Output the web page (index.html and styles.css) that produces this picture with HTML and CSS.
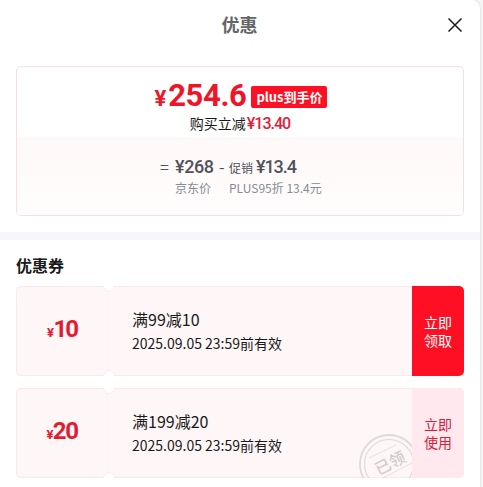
FILE: index.html
```html
<!DOCTYPE html>
<html lang="zh-CN">
<head>
  <meta charset="UTF-8" />
  <meta name="viewport" content="width=device-width, initial-scale=1.0"/>
  <title>优惠</title>
  <link rel="stylesheet" href="styles.css">
</head>
<body>
  <div class="popup">
    <header class="popup-header">
      <h1>优惠</h1>
      <button class="close" type="button" aria-label="关闭">
        <svg width="16" height="16" viewBox="0 0 16 16"><path d="M1.5 1.5l13 13M14.5 1.5l-13 13" fill="none" stroke="#1a1a1a" stroke-width="1.5"/></svg>
      </button>
    </header>

    <section class="price-card">
      <div class="price-top">
        <div class="final-price">
          <span class="yen">¥</span><span class="amount">254.6</span><span class="tag">plus到手价</span>
        </div>
        <div class="saving">购买立减<span class="saving-price">¥13.40</span></div>
      </div>
      <div class="price-detail">
        <span class="sign equal">=</span>
        <div class="item base">
          <div class="value">¥268</div>
          <div class="note">京东价</div>
        </div>
        <span class="sign minus">-</span>
        <div class="item">
          <div class="value"><span class="label">促销</span>¥13.4</div>
          <div class="note">PLUS95折 13.4元</div>
        </div>
      </div>
    </section>

    <div class="divider"></div>

    <section class="coupons">
      <h2>优惠券</h2>
      <div class="coupon">
        <div class="coupon-price"><span class="coupon-yen">¥</span>10</div>
        <div class="coupon-info">
          <div class="coupon-title">满99减10</div>
          <div class="coupon-time">2025.09.05 23:59前有效</div>
        </div>
        <button class="coupon-btn" type="button">立即<br>领取</button>
      </div>
      <div class="coupon received">
        <div class="coupon-price"><span class="coupon-yen">¥</span>20</div>
        <div class="coupon-info">
          <div class="coupon-title">满199减20</div>
          <div class="coupon-time">2025.09.05 23:59前有效</div>
          <svg class="stamp" width="53" height="45" viewBox="0 0 53 45">
            <g fill="none" stroke="#e0d8da">
              <circle cx="30" cy="31" r="29" stroke-width="1.8"/>
              <circle cx="30" cy="31" r="24.5" stroke-width="1.2"/>
              <path d="M10 25L37 12M20 47L53 30" stroke-width="0.8"/>
            </g>
            <text class="stamp-text" x="31" y="36" text-anchor="middle" transform="rotate(-27 31 30)">已领</text>
          </svg>
        </div>
        <button class="coupon-btn" type="button">立即<br>使用</button>
      </div>
    </section>
  </div>
</body>
</html>
```
FILE: styles.css
```css
* {
  box-sizing: border-box;
}
body {
  margin: 0;
  height: 487px;
  overflow: hidden;
  background: #f5f5f6;
  font-family: "Noto Sans CJK SC", sans-serif;
  color: #1a1a1a;
}
h1, h2 {
  margin: 0;
}
button {
  border: 0;
  padding: 0;
  font-family: inherit;
}
.popup {
  width: 480px;
  height: 487px;
  background: #fff;
  border-top-right-radius: 8px;
  box-shadow: 0 0 2px rgba(0, 0, 0, 0.18);
}
.popup-header {
  display: grid;
  grid-template-columns: 1fr auto 1fr;
  align-items: center;
  height: 66px;
  padding: 0 17px 19px 16px;
}
.popup-header h1 {
  grid-column: 2;
  font-size: 18px;
  line-height: 26px;
  color: #666;
}
.close {
  justify-self: end;
  display: flex;
  background: none;
  margin-top: 3px;
}

/* price */
.price-card {
  width: 448px;
  height: 150px;
  margin: 0 16px;
  border: 1px solid #f7dfe4;
  border-radius: 5px;
  overflow: hidden;
}
.price-top {
  height: 71px;
  padding-top: 9px;
}
.final-price {
  display: flex;
  justify-content: center;
  align-items: baseline;
  height: 37px;
  padding-left: 1px;
  line-height: 40px;
  font-family: Roboto, "Noto Sans CJK SC", sans-serif;
  font-weight: 700;
  color: #f01428;
}
.yen {
  font-size: 22px;
  margin-right: 2px;
}
.amount {
  font-size: 31px;
  letter-spacing: -0.4px;
}
.tag {
  align-self: flex-start;
  height: 22px;
  margin: 10px 0 0 5px;
  padding: 0 4px 0 5px;
  border-radius: 2px;
  background: #ff0f23;
  color: #fff;
  font: 700 13px/22px "Noto Sans CJK SC", sans-serif;
}
.saving {
  height: 20px;
  line-height: 20px;
  font-size: 14px;
  text-align: center;
}
.saving-price {
  margin-left: 1px;
  font-family: Roboto, sans-serif;
  font-size: 16px;
  font-weight: 500;
  letter-spacing: -1px;
  color: #e02038;
}
.price-detail {
  display: flex;
  height: 77px;
  padding: 16px 0 0 143px;
  border-top: 1px solid #fbf3f4;
  background: linear-gradient(#fff9f9, #fffdfd);
  color: #505259;
}
.sign {
  font-size: 16px;
  line-height: 22px;
}
.equal {
  width: 15px;
}
.minus {
  width: 10px;
}
.item.base {
  width: 44px;
}
.value {
  height: 23px;
  line-height: 23px;
  font-family: Roboto, "Noto Sans CJK SC", sans-serif;
  font-size: 18px;
  font-weight: 500;
  letter-spacing: -1.1px;
  white-space: nowrap;
}
.item.base .value {
  letter-spacing: -0.4px;
}
.label {
  margin-right: 3px;
  font-family: "Noto Sans CJK SC", sans-serif;
  font-size: 12px;
  font-weight: 400;
  letter-spacing: 0;
}
.note {
  font-size: 12px;
  line-height: 20px;
  color: #888b94;
  white-space: nowrap;
}

.divider {
  height: 8px;
  margin-top: 16px;
  background: #f6f6fc;
}

/* coupons */
.coupons {
  padding: 13px 16px 0;
}
.coupons h2 {
  height: 33px;
  font-size: 16px;
  line-height: 24px;
}
.coupon {
  position: relative;
  display: flex;
  height: 90px;
  margin-bottom: 12px;
  border-radius: 5px;
  background: #fff6f7;
  box-shadow: inset 0 0 0 1px #fae8eb;
  overflow: hidden;
}
/* ticket notches */
.coupon::before,
.coupon::after {
  content: "";
  position: absolute;
  left: 87px;
  width: 10px;
  height: 10px;
  border: 1px solid #faeaed;
  border-radius: 50%;
  background: #fff;
}
.coupon::before {
  top: -6px;
}
.coupon::after {
  bottom: -6px;
}
.coupon-price {
  width: 92px;
  padding-left: 1px;
  border-right: 1px dashed #fcf0f2;
  font-family: Roboto, sans-serif;
  font-size: 24px;
  font-weight: 700;
  line-height: 87px;
  letter-spacing: -2px;
  text-align: center;
  color: #e01c34;
}
.received .coupon-price {
  letter-spacing: -1.4px;
}
.coupon-price .coupon-yen {
  font-size: 13px;
  letter-spacing: -0.5px;
}
.coupon-info {
  position: relative;
  flex: 1;
  padding: 21px 0 0 24px;
}
.coupon-title {
  font-size: 16px;
  line-height: 24px;
}
.coupon-time {
  font-size: 14px;
  line-height: 24px;
}
.coupon-btn {
  width: 52px;
  background: #ff0f23;
  color: #fff;
  font-size: 14px;
  line-height: 18px;
}
.received .coupon-btn {
  background: #ffe9ef;
  color: #d6203a;
}
.stamp {
  position: absolute;
  right: 0;
  bottom: 0;
}
.stamp-text {
  font-size: 16px;
  font-weight: 500;
  fill: #d3cbce;
}
```
